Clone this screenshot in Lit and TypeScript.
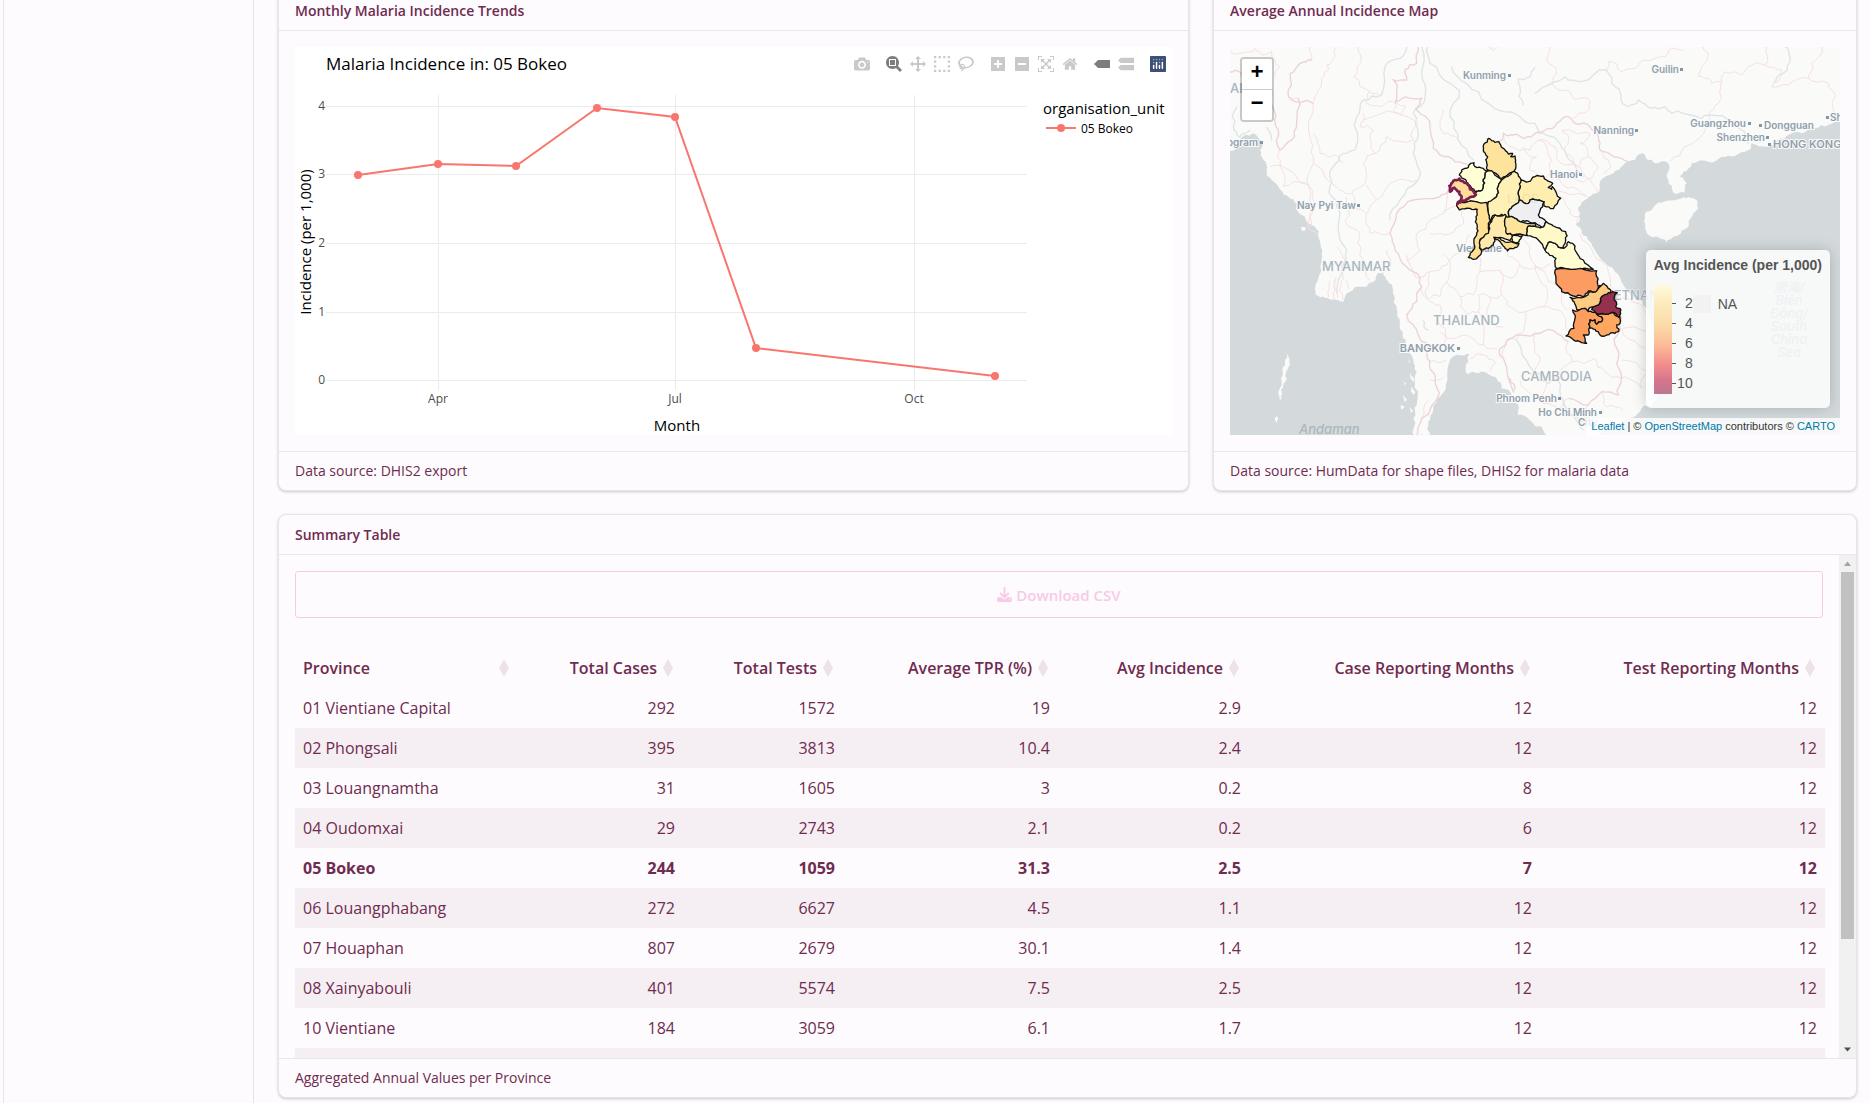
import { LitElement, html, svg, css } from "lit";
import { customElement } from "lit/decorators.js";

/* ---------- data ---------- */

interface Row {
  name: string;
  cases: string;
  tests: string;
  tpr: string;
  incidence: string;
  caseMonths: string;
  testMonths: string;
}

const row = (
  name: string, cases: string, tests: string, tpr: string,
  incidence: string, caseMonths: string, testMonths: string,
): Row => ({ name, cases, tests, tpr, incidence, caseMonths, testMonths });

const ROWS: Row[] = [
  row("01 Vientiane Capital", "292", "1572", "19", "2.9", "12", "12"),
  row("02 Phongsali", "395", "3813", "10.4", "2.4", "12", "12"),
  row("03 Louangnamtha", "31", "1605", "3", "0.2", "8", "12"),
  row("04 Oudomxai", "29", "2743", "2.1", "0.2", "6", "12"),
  row("05 Bokeo", "244", "1059", "31.3", "2.5", "7", "12"),
  row("06 Louangphabang", "272", "6627", "4.5", "1.1", "12", "12"),
  row("07 Houaphan", "807", "2679", "30.1", "1.4", "12", "12"),
  row("08 Xainyabouli", "401", "5574", "7.5", "2.5", "12", "12"),
  row("10 Vientiane", "184", "3059", "6.1", "1.7", "12", "12"),
];

const SELECTED = "05 Bokeo";

const COLUMNS: { key: keyof Row; label: string; cls: string }[] = [
  { key: "name", label: "Province", cls: "c-name" },
  { key: "cases", label: "Total Cases", cls: "c-cases" },
  { key: "tests", label: "Total Tests", cls: "c-tests" },
  { key: "tpr", label: "Average TPR (%)", cls: "c-tpr" },
  { key: "incidence", label: "Avg Incidence", cls: "c-inc" },
  { key: "caseMonths", label: "Case Reporting Months", cls: "c-casem" },
  { key: "testMonths", label: "Test Reporting Months", cls: "c-testm" },
];

const SERIES: [number, number][] = [
  [63, 128], [143, 117], [221, 119], [302, 61], [380, 70], [461, 301], [700, 329],
];

/* ---------- chart toolbar icons (1000-unit em, y axis up) ---------- */

const cells = [0, 1, 2, 3].flatMap((i) => [
  `M${i * 286} -150h143v143h-143z`, `M${i * 286} 707h143v143h-143z`,
  `M0 ${-150 + i * 286}h143v143h-143z`, `M857 ${-150 + i * 286}h143v143h-143z`,
]).join("");

interface Tool { label: string; w: number; d: string; active?: boolean }

const TOOLS: Tool[][] = [
  [
    { label: "Download plot as a png", w: 1000, d: "m500 450c-83 0-150-67-150-150 0-83 67-150 150-150 83 0 150 67 150 150 0 83-67 150-150 150z m400 150h-120c-16 0-34 13-39 29l-31 93c-6 15-23 28-40 28h-340c-16 0-34-13-39-28l-31-94c-6-15-23-28-40-28h-120c-55 0-100-45-100-100v-450c0-55 45-100 100-100h800c55 0 100 45 100 100v450c0 55-45 100-100 100z m-400-550c-138 0-250 112-250 250 0 138 112 250 250 250 138 0 250-112 250-250 0-138-112-250-250-250z m365 380c-19 0-35 16-35 35 0 19 16 35 35 35 19 0 35-16 35-35 0-19-16-35-35-35z" },
  ],
  [
    { label: "Zoom", w: 1000, active: true, d: "m1000-25l-250 251c40 63 63 138 63 218 0 224-182 406-407 406-224 0-406-182-406-406s183-406 407-406c80 0 155 22 218 62l250-250 125 125z m-812 250l0 438 437 0 0-438-437 0z m62 375l313 0 0-312-313 0 0 312z" },
    { label: "Pan", w: 1000, d: "m1000 350l-187 188 0-125-250 0 0 250 125 0-188 187-187-187 125 0 0-250-250 0 0 125-188-188 186-187 0 125 252 0 0-250-125 0 187-188 188 188-125 0 0 250 250 0 0-126 187 188z" },
    { label: "Box Select", w: 1000, d: cells },
    { label: "Lasso Select", w: 1031, d: "m1018 538c-36 207-290 336-568 286-277-48-473-256-436-463 10-57 36-108 76-151-13-66 11-137 68-183 34-28 75-41 114-42l-55-70 0 0c-2-1-3-2-4-3-10-14-8-34 5-45 14-11 34-8 45 4 1 1 2 3 2 5l0 0 113 140c16 11 31 24 45 40 4 3 6 7 8 11 48-3 100 0 151 9 278 48 473 255 436 462z m-624-379c-80 14-149 48-197 96 42 42 109 47 156 9 33-26 47-66 41-105z m-187-74c-19 16-33 37-39 60 50-32 109-55 174-68-42-25-95-24-135 8z m360 75c-34-7-69-9-102-8 8 62-16 128-68 170-73 59-175 54-244-5-9 20-16 40-20 61-28 159 121 317 333 354s407-60 434-217c28-159-121-318-333-355z" },
  ],
  [
    { label: "Zoom in", w: 875, d: "m1 787l0-875 875 0 0 875-875 0z m687-500l-187 0 0-187-125 0 0 187-188 0 0 125 188 0 0 187 125 0 0-187 187 0 0-125z" },
    { label: "Zoom out", w: 875, d: "m0 788l0-876 876 0 0 876-876 0z m688-500l-500 0 0 125 500 0 0-125z" },
    { label: "Autoscale", w: 1000, d: "m250 850l-187 0-63 0 0-62 0-188 63 0 0 188 187 0 0 62z m688 0l-188 0 0-62 188 0 0-188 62 0 0 188 0 62-62 0z m-875-938l0 188-63 0 0-188 0-62 63 0 187 0 0 62-187 0z m875 188l0-188-188 0 0-62 188 0 62 0 0 62 0 188-62 0z m-125 188l-1 0-93-94-156 156 156 156 92-93 2 0 0 250-250 0 0-2 93-92-156-156-156 156 94 92 0 2-250 0 0-250 0 0 93 93 157-156-157-156-93 94 0 0 0-250 250 0 0 0-94 93 156 157 156-157-93-93 0 0 250 0 0 250z" },
    { label: "Reset axes", w: 929, d: "m786 296v-267q0-15-11-26t-25-10h-214v214h-143v-214h-214q-15 0-25 10t-11 26v267q0 1 0 2t0 2l321 264 321-264q1-1 1-4z m124 39l-34-41q-5-5-12-6h-2q-7 0-12 3l-386 322-386-322q-7-4-13-4-7 2-12 7l-35 41q-4 5-3 13t6 12l401 334q18 15 42 15t43-15l136-114v109q0 8 5 13t13 5h107q8 0 13-5t5-13v-227l122-102q5-5 6-12t-4-13z" },
  ],
  [
    { label: "Show closest data on hover", w: 1500, active: true, d: "m375 725l0 0-375-375 375-374 0-1 1125 0 0 750-1125 0z" },
    { label: "Compare data on hover", w: 1125, d: "m187 786l0 2-187-188 188-187 0 0 937 0 0 373-938 0z m0-499l0 1-187-188 188-188 0 0 937 0 0 376-938-1z" },
  ],
];

/* ---------- map geometry (three units to a map pixel) ---------- */

/** Turns a coarse outline into an irregular natural-looking one. */
function rough(points: string, amp: number, closed = false): string {
  let pts = points.trim().split(/\s+/).map((p) => p.split(",").map(Number));
  if (closed) pts.push(pts[0]);
  for (let pass = 0; pass < 2; pass++) {
    const next: number[][] = [];
    for (let i = 0; i < pts.length - 1; i++) {
      const [ax, ay] = pts[i];
      const [bx, by] = pts[i + 1];
      const dx = bx - ax;
      const dy = by - ay;
      const len = Math.hypot(dx, dy) || 1;
      // The same edge gives the same jitter whichever way it is walked.
      const s = Math.sin((ax + bx) * 12.9898 + (ay + by) * 78.233) * 43758.5453;
      const side = ax + ay > bx + by ? -1 : 1;
      const k = len < 8 ? 0 : (s - Math.floor(s) - 0.5) * side * Math.min(amp, len * 0.45);
      next.push(pts[i], [(ax + bx) / 2 - (dy / len) * k, (ay + by) / 2 + (dx / len) * k]);
    }
    next.push(pts[pts.length - 1]);
    pts = next;
  }
  return "M" + pts.map((p) => p.map((v) => Math.round(v * 10) / 10).join(" ")).join("L") + (closed ? "Z" : "");
}

const MAINLAND = `15,309 45,264 70,259 95,284 90,309 100,339 110,369 125,399 155,431 175,449 200,471 230,524 255,539 265,569 276,609
276,634 268,684 258,744 285,752 310,757 340,764 360,734 390,719 425,706 440,684 460,676 475,704 488,724 495,754 500,784 510,829 518,864 525,894
550,939 560,974 565,1034 560,1074 550,1114 555,1170 600,1170 595,1124 610,1089 630,1049 652,999 660,939 690,924 718,922 715,944 713,982 745,979
775,982 800,994 815,1024 840,1034 850,1064 865,1074 865,1104 895,1114 910,1129 935,1140 960,1170 1075,1170 1125,1149 1200,1113 1235,1084 1265,1079
1280,1034 1280,924 1270,860 1250,784 1235,759 1205,744 1180,714 1155,674 1115,639 1095,609 1080,584 1055,559 1037,531 1050,499 1055,464 1075,449
1100,439 1110,404 1125,389 1150,379 1180,354 1215,339 1235,319 1250,337 1275,349 1315,349 1315,399 1330,437 1365,437 1370,409 1350,389 1360,374
1385,349 1435,344 1475,329 1515,327 1555,309 1565,289 1580,294 1605,299 1650,274 1675,264 1715,259 1755,244 1795,234 1830,219`;

const ISLANDS = [
  "1245,499 1260,491 1280,471 1300,464 1345,457 1375,451 1395,456 1403,479 1390,499 1377,519 1370,544 1345,564 1325,574 1310,586 1290,574 1250,559 1245,529",
  "175,919 178,944 168,974 172,994 160,1014 155,1044 148,1064 150,1024 158,984 165,944",
  "140,1104 146,1115 140,1128 134,1115",
  "225,505 240,515 248,535 235,530", "212,540 228,545 222,552",
  "540,965 548,990 552,1005 542,995", "520,1000 530,1010 524,1016", "545,1020 556,1035 550,1050 543,1035",
  "520,1045 530,1060 522,1065", "535,930 541,945 536,948", "512,1075 524,1080 516,1088", "540,1080 550,1090 543,1098",
  "1640,285 1652,280 1655,292 1644,296",
];

const BORDERS = [
  "565,0 560,49 525,69 530,99 490,99 495,169 510,159 575,154 560,189 600,239 610,304 655,329 700,349 730,359",
  "655,429 630,449 550,459 500,499 480,559 495,609 510,634 550,674 575,719 560,764 530,804 565,864 595,894 600,944 615,984 628,1039 575,1114 560,1170",
  "800,289 820,259 850,264 885,274 915,259 945,249 980,229 1015,209 1035,229 1080,239 1105,269 1110,309 1150,329 1195,344",
  "810,904 860,864 915,859 970,850 1015,884", "250,169 175,149 180,79 210,49 245,39",
  "205,154 200,229 185,279 150,309 145,249 132,189 125,129", "0,75 30,75 40,90", "840,994 850,1034 820,934 810,904",
  "1015,1054 1075,1074 1115,1034 1165,1044 1175,994 1165,934 1155,894 1170,834 1165,754",
];

const ADMIN = [
  "2,14 40,19 75,4 100,24 125,14 150,59 135,89", "320,0 315,29 290,54 295,69 275,109 255,149 250,169 242,279 250,349 240,419 255,479 245,539",
  "240,0 245,39 210,49", "175,149 205,154", "385,0 390,49 372,89 420,134 410,169 450,179 500,169",
  "250,259 270,319 320,324 340,349", "400,199 390,239 430,249 435,319 470,269 550,279 565,229 500,199 400,219",
  "435,319 400,349 405,409 365,439 370,479 410,499 440,459 410,414", "120,359 150,354 160,419 190,404 235,414 240,459 235,530 262,560",
  "150,309 150,354 200,390 235,414", "500,169 525,175 515,205 490,190 500,169", "410,499 420,560 480,559", "350,450 345,520 390,570 400,640 420,700",
  "320,600 350,640 340,700", "655,429 640,500 600,520 560,560 570,610 530,640", "640,500 690,480 700,530 660,560 600,560",
  "960,0 950,39 980,74 963,109 1005,129 1035,159 1073,154 1070,194 1030,214", "1130,74 1135,44 1175,74 1215,64 1245,39 1295,29 1325,4 1360,9",
  "1420,0 1435,24 1405,89 1435,94 1445,109 1475,104 1485,74 1535,84 1555,59 1605,54 1610,0", "1475,104 1465,169 1435,204 1430,239 1365,299 1320,344",
  "1605,54 1655,69 1625,119 1675,114 1735,94 1745,49 1777,0", "1735,94 1795,109 1810,159 1820,199", "775,0 790,12 800,0",
  "925,279 975,299 995,349 1045,359 1065,389 1105,439", "995,249 1015,279 1005,319 1045,359 1075,329 1050,289 1080,259 1030,254 995,249",
  "965,389 1005,419 1045,429 1070,449 975,429", "990,449 1010,479 1045,509 1040,530", "880,300 920,330 900,370 950,390 965,340 925,279",
  "1075,329 1105,360 1080,395 1040,400 1020,370", "1110,309 1140,350 1120,380", "925,279 900,310 840,300 820,259",
  "530,624 560,694 600,674 650,654 700,614 720,560", "590,754 630,749 650,704 690,749 730,744 750,674 810,669 840,694 870,654 910,664 960,650",
  "745,794 745,744 815,744 830,774 885,794 880,854 830,884 820,934", "630,854 650,874 710,864 760,894 800,904",
  "595,944 650,939", "720,934 760,924 795,944 780,974", "630,774 625,824 650,874 645,914", "590,754 575,719", "600,674 590,754 630,774",
  "750,674 740,620 760,580 820,600 860,640 870,654", "690,749 710,800 745,794 760,894", "815,744 810,669", "885,794 940,780 990,790 1010,850",
  "915,859 930,930 900,980 950,1010 1025,944 1095,934 1125,974 1175,994", "1015,884 1025,944", "950,1010 940,1070 990,1090 1015,1054",
  "1165,994 1235,1024 1255,974 1175,939", "1135,674 1165,754 1245,794 1245,854 1175,844", "1175,844 1230,900 1260,910", "915,654 955,704 995,734 1010,790",
  "1050,560 1090,620 1135,674", "940,780 950,720 915,654 900,600 860,560", "1115,1034 1130,1080 1180,1090", "1075,1074 1060,1110 1100,1140",
  "870,1000 920,1040 940,1070", "600,1000 640,990", "595,1060 575,1114", "480,660 470,610", "300,700 296,750", "318,690 322,752", "310,700 312,755", "334,700 338,758", "350,700 356,728",
  "250,349 330,430 365,439", "565,399 500,400 440,459", "640,189 640,260 685,279", "420,134 455,144", "640,620 660,660 650,704", "780,750 770,800 820,840",
];

const RIVERS = [
  "530,0 510,34 465,59 455,144 400,159 380,209 375,309 340,319 310,359 300,419 320,479 325,549 350,609 340,660 320,740",
  "575,0 575,79 585,149 550,199 565,259 550,319 565,399 510,459 480,520", "592,0 600,49 660,109 688,129 660,209 685,279 730,339",
  "665,59 710,109 775,169 870,209 915,229 990,290 1020,340 1060,390", "915,139 965,109 1005,89 1055,104 1130,69 1155,119 1175,164 1195,179 1225,159 1265,184 1305,179 1325,199 1395,207 1435,204 1515,224 1555,290",
  "1665,0 1680,29 1660,79 1630,109", "880,175 870,120 865,95 900,90 915,60", "20,180 10,240 30,270 60,250", "110,240 120,260 125,280", "580,820 595,850",
  "985,1000 1000,1060 1020,1100 1060,1150", "1000,1060 1040,1110 1100,1150", "860,880 900,960 960,1010",
];

const PROVINCES: [string, string][] = [
  ["#fee39c", "205,55 192,72 190,88 203,110 200,130 203,150 210,152 240,175 262,165 283,152 286,125 285,108 272,110 278,100 265,102 250,85 236,65 215,62"],
  ["#ffffd6", "118,165 125,150 145,142 152,130 162,128 165,140 190,145 197,152 203,153 195,170 190,178 190,200 182,213 165,215 145,193 135,178"],
  ["#ffffd6", "203,153 215,152 240,175 245,180 232,205 230,230 215,243 180,250 135,245 160,225 182,213 190,200 190,178 195,170"],
  ["#fff0b5", "245,180 262,170 283,154 295,168 303,178 300,205 298,240 275,262 265,275 268,290 262,295 245,283 225,285 212,305 208,290 205,245 230,230 232,205"],
  ["#ffeeb0", "303,180 325,185 345,170 370,168 380,180 398,190 385,203 395,208 397,200 422,235 400,266 372,258 372,245 358,240 340,237 325,250 298,240 300,205"],
  ["#efeff2", "298,240 325,250 340,237 358,240 372,245 368,260 355,285 378,305 365,322 350,312 345,308 320,302 300,305 280,292 268,290 265,275 275,262"],
  ["#fee094", "110,252 135,248 200,247 208,290 205,310 207,340 185,355 180,370 185,395 160,418 145,412 160,390 162,370 170,345 172,320 168,290 172,268 150,265 118,270"],
  ["#ffe9ac", "258,292 255,283 225,285 210,310 205,340 185,355 180,375 185,390 205,385 220,375 222,352 240,352 270,362 280,345 262,342"],
  ["#fffdd0", "280,345 307,347 297,365 275,365"],
  ["#fee39a", "258,290 280,292 300,305 345,310 347,320 323,320 322,347 280,345 262,342 258,325"],
  ["#fedf90", "222,352 240,355 250,362 275,365 297,370 290,382 270,385 263,393 255,385 245,372 235,360"],
  ["#fff9c8", "323,320 347,320 365,322 378,305 400,318 437,335 437,360 430,385 415,382 405,370 385,368 375,390 355,360 322,347"],
  ["#fffcd2", "375,390 385,368 405,370 415,382 432,385 445,365 458,370 465,390 490,420 520,448 465,448 410,446 408,415 385,400"],
  ["#fd9c62", "406,448 465,448 530,452 532,485 535,500 545,497 530,515 505,513 490,530 460,528 425,515 408,490"],
  ["#fdcc82", "450,532 495,530 508,515 530,513 550,490 570,508 572,516 555,525 540,545 530,560 510,562 505,575 495,565 470,568 462,545"],
  ["#fd9e5f", "458,570 495,565 505,575 530,580 545,590 545,605 530,613 525,600 510,600 508,625 505,645 490,645 500,670 480,665 455,655 438,648 462,625 465,595"],
  ["#fea95f", "530,582 565,582 580,577 600,595 600,610 590,615 597,628 585,640 560,645 540,645 525,628 508,625 510,600 525,600 530,613 545,605 545,590"],
  ["#96304f", "515,568 535,555 545,530 565,518 592,518 583,530 587,560 603,570 600,592 575,577 565,582 530,582"],
];

const BOKEO = "118,176 100,182 88,198 90,215 103,203 118,215 125,232 112,252 130,242 150,232 168,224 150,208 140,190";

interface Place { t: string; x: number; y: number; m?: number; end?: boolean; big?: boolean }

const CITIES: Place[] = [
  { t: "Kunming", x: 276, y: 32, m: 279, end: true },
  { t: "Nay Pyi Taw", x: 126, y: 162, m: 128, end: true },
  { t: "Chattogram", x: 28, y: 99, m: 31, end: true },
  { t: "Guilin", x: 449, y: 26, m: 451, end: true },
  { t: "Nanning", x: 404, y: 87, m: 406, end: true },
  { t: "Guangzhou", x: 516, y: 80, m: 519, end: true },
  { t: "Shenzhen", x: 535, y: 94, m: 537, end: true },
  { t: "Dongguan", x: 534, y: 82, m: 530 },
  { t: "HONG KONG", x: 543, y: 101, m: 539, big: true },
  { t: "Shantou", x: 600, y: 74, m: 597 },
  { t: "Hanoi", x: 348, y: 131, m: 350, end: true },
  { t: "BANGKOK", x: 225, y: 305, m: 228, end: true, big: true },
  { t: "Phnom Penh", x: 327, y: 355, m: 329, end: true },
  { t: "Ho Chi Minh", x: 367, y: 369, m: 370, end: true },
  { t: "City", x: 348, y: 379 },
  { t: "Vientiane", x: 226, y: 205 },
];

const COUNTRIES: Place[] = [
  { t: "AD", x: 0, y: 46 },
  { t: "MYANMAR", x: 92, y: 224 },
  { t: "THAILAND", x: 203, y: 278 },
  { t: "CAMBODIA", x: 291, y: 334 },
  { t: "VIETNAM", x: 431, y: 253, end: true },
];

const SEA = ["南海/", "Biên", "Đông/", "South", "China", "Sea"];

/* ---------- elements ---------- */

@customElement("trend-chart")
class TrendChart extends LitElement {
  static styles = css`
    :host { display: block; position: relative; background: #fff; }
    .plot { display: block; width: 100%; height: 388px; font-family: "Open Sans", sans-serif; }
    .grid { stroke: #ebebeb; stroke-width: 1; shape-rendering: crispEdges; }
    .series { fill: none; stroke: #f8766d; stroke-width: 2; }
    .dot { fill: #f8766d; }
    .title { font-size: 17px; }
    .axis { font-size: 15px; }
    .tick { font-size: 12px; fill: #4d4d4d; }
    .legend { font-size: 12px; }
    .modebar { position: absolute; top: 9px; right: 2px; display: flex; gap: 8px; }
    .group { display: flex; }
    .tool { display: flex; padding: 0 4px; border: 0; background: none; width: 24px; height: 16px; align-items: center; justify-content: center; }
    .tool svg { width: 16px; height: 16px; fill: #c9c9cb; }
    .tool.active svg { fill: #7d7d7d; }
  `;

  render() {
    const line = SERIES.map((p) => p.join(",")).join(" ");
    return html`
      <svg class="plot" viewBox="0 0 877 388" preserveAspectRatio="xMinYMin meet" role="img" aria-label="Malaria Incidence in: 05 Bokeo">
        ${[59, 127, 196, 265, 333].map((y, i) => svg`
          <line class="grid" x1="31" x2="732" y1=${y + 0.5} y2=${y + 0.5}></line>
          <text class="tick" x="30" y=${y + 4} text-anchor="end">${4 - i}</text>`)}
        ${[["Apr", 143], ["Jul", 380], ["Oct", 619]].map(([t, x]) => svg`
          <line class="grid" x1=${Number(x) + 0.5} x2=${Number(x) + 0.5} y1="48" y2="343"></line>
          <text class="tick" x=${x} y="356" text-anchor="middle">${t}</text>`)}
        <polyline class="series" points=${line}></polyline>
        ${SERIES.map(([x, y]) => svg`<circle class="dot" cx=${x} cy=${y} r="4"></circle>`)}
        <text class="title" x="31" y="23">Malaria Incidence in: 05 Bokeo</text>
        <text class="axis" x="382" y="384" text-anchor="middle">Month</text>
        <text class="axis" transform="translate(16 195) rotate(-90)" text-anchor="middle">Incidence (per 1,000)</text>
        <text class="axis" x="748" y="67">organisation_unit</text>
        <line class="series" x1="751" x2="781" y1="81" y2="81"></line>
        <circle class="dot" cx="766" cy="81" r="4"></circle>
        <text class="legend" x="786" y="86">05 Bokeo</text>
      </svg>
      <div class="modebar">
        ${TOOLS.map((g) => html`<div class="group">${g.map((t) => html`
          <button class="tool ${t.active ? "active" : ""}" type="button" aria-label=${t.label}>
            <svg viewBox="0 0 ${t.w} 1000"><path transform="matrix(1 0 0 -1 0 850)" d=${t.d}></path></svg>
          </button>`)}</div>`)}
        <div class="group">
          <button class="tool" type="button" aria-label="Produced with Plotly">
            <svg viewBox="0 0 132 132">
              <rect width="132" height="132" rx="6" fill="#3f4f75"></rect>
              <g fill="#80cfbe">
                <circle cx="78" cy="54" r="6"></circle><circle cx="102" cy="30" r="6"></circle><circle cx="78" cy="30" r="6"></circle>
                <circle cx="54" cy="30" r="6"></circle><circle cx="30" cy="30" r="6"></circle><circle cx="30" cy="54" r="6"></circle>
              </g>
              <g fill="#fff">
                <rect x="24" y="72" width="12" height="36" rx="6"></rect><rect x="48" y="48" width="12" height="60" rx="6"></rect>
                <rect x="72" y="72" width="12" height="36" rx="6"></rect><rect x="96" y="48" width="12" height="60" rx="6"></rect>
              </g>
            </svg>
          </button>
        </div>
      </div>`;
  }
}

@customElement("incidence-map")
class IncidenceMap extends LitElement {
  static styles = css`
    :host { display: block; position: relative; overflow: hidden; background: #d4dadc; font-family: "Liberation Sans", Arial, sans-serif; }
    .base { display: block; width: 100%; height: 388px; font-family: Inter, "Noto Sans CJK SC", sans-serif; }
    .land { fill: #fafaf8; }
    .admin { fill: none; stroke: #f4e0e3; stroke-width: 3; }
    .border { fill: none; stroke: #edd2d7; stroke-width: 4; }
    .river { fill: none; stroke: #dfe4e8; stroke-width: 4; }
    .province { stroke: #111; stroke-width: 4; stroke-linejoin: round; }
    .chosen { fill: #fedd98; stroke: #7b1d4f; stroke-width: 8; stroke-linejoin: round; }
    .city { font-size: 10px; font-weight: 600; fill: #8f9fae; stroke: #fafaf8; stroke-width: 2; paint-order: stroke; }
    .big { font-size: 11px; }
    .mark { fill: #8496a5; }
    .country { font-size: 13px; font-weight: 500; fill: #a9b6bf; stroke: #fafaf8; stroke-width: 1; paint-order: stroke; }
    .ghost { font-size: 12px; fill: #8a9299; opacity: 0.15; }
    .sea { font-size: 13px; font-style: italic; font-weight: 500; fill: #abb7bd; }
    .zoom { position: absolute; top: 10px; left: 10px; display: flex; flex-direction: column; border: 2px solid rgba(0, 0, 0, 0.2); border-radius: 4px; background-clip: padding-box; }
    .zoom button { width: 30px; height: 30px; padding: 0; border: 0; background: #fff; font: bold 22px/30px "Liberation Mono", monospace; color: #000; }
    .zoom .in { height: 31px; border-bottom: 1px solid #ccc; border-radius: 2px 2px 0 0; }
    .zoom .out { border-radius: 0 0 2px 2px; }
    .legend { position: absolute; right: 10px; bottom: 27px; padding: 6px 8px; height: 146px; border-radius: 5px; background: rgba(255, 255, 255, 0.8); box-shadow: 0 0 15px rgba(0, 0, 0, 0.2); font-size: 14px; line-height: 20px; color: #555; }
    .legend strong { display: block; line-height: 19px; margin-bottom: 10px; }
    .scale { display: flex; }
    .ramp { width: 18px; height: 109px; background: linear-gradient(#fffadb, #fcebbd 17%, #fbdca8 36%, #fbbf99 54%, #f48f8b 72%, #d5758c 88%, #bb7890); }
    .ticks { display: flex; flex-direction: column; padding-top: 8px; width: 21px; }
    .ticks span { position: relative; text-align: right; }
    .ticks span::before { content: ""; position: absolute; left: 0; top: 10px; width: 4px; height: 1px; background: #555; }
    .na { display: flex; gap: 7px; height: 18px; margin-top: 10px; line-height: 18px; }
    .na i { width: 18px; background: #f2f2f3; }
    .credit { position: absolute; right: 0; bottom: 0; padding: 0 5px; background: rgba(255, 255, 255, 0.8); font-size: 11px; line-height: 17px; color: #333; }
    .credit a { color: #0078a8; text-decoration: none; }
  `;

  render() {
    return html`
      <svg class="base" viewBox="0 0 611 388" preserveAspectRatio="xMinYMin slice" role="img" aria-label="Average annual incidence by province">
        <g transform="scale(0.33333)">
          <path class="land" d="${rough(MAINLAND, 16)}L1900 219L1900 -5L-5 -5L-5 314Z"></path>
          ${ISLANDS.map((p) => svg`<path class="land" d=${rough(p, 10, true)}></path>`)}
          ${RIVERS.map((p) => svg`<path class="river" d=${rough(p, 18)}></path>`)}
          ${ADMIN.map((p) => svg`<path class="admin" d=${rough(p, 22)}></path>`)}
          ${BORDERS.map((p) => svg`<path class="border" d=${rough(p, 18)}></path>`)}
        </g>
        ${COUNTRIES.map((c) => svg`<text class="country" x=${c.x} y=${c.y} text-anchor=${c.end ? "end" : "start"}>${c.t}</text>`)}
        ${CITIES.map((c) => svg`
          <text class="city ${c.big ? "big" : ""}" x=${c.x} y=${c.y} text-anchor=${c.end ? "end" : "start"}>${c.t}</text>
          ${c.m ? svg`<rect class="mark" x=${c.m - 1} y=${c.y - 5} width="3" height="3"></rect>` : ""}`)}
        <text class="sea" x="69" y="387">Andaman</text>
        ${SEA.map((t, i) => svg`<text class="sea" x="559" y=${245 + i * 13} text-anchor="middle">${t}</text>`)}
        <g transform="translate(190 73) scale(0.33333)">
          ${PROVINCES.map(([fill, p]) => svg`<path class="province" fill=${fill} d=${rough(p, 9, true)}></path>`)}
          <path class="chosen" d=${rough(BOKEO, 6, true)}></path>
        </g>
        <text class="ghost" x="277" y="156">LAOS</text>
      </svg>
      <div class="zoom">
        <button class="in" type="button" aria-label="Zoom in">+</button>
        <button class="out" type="button" aria-label="Zoom out">−</button>
      </div>
      <div class="legend">
        <strong>Avg Incidence (per 1,000)</strong>
        <div class="scale">
          <div class="ramp"></div>
          <div class="ticks">${[2, 4, 6, 8, 10].map((n) => html`<span>${n}</span>`)}</div>
          <div class="na"><i></i><span>NA</span></div>
        </div>
      </div>
      <div class="credit"><a href="#leaflet">Leaflet</a> | © <a href="#osm">OpenStreetMap</a> contributors © <a href="#carto">CARTO</a></div>`;
  }
}

@customElement("app-root")
class AppRoot extends LitElement {
  static styles = css`
    :host { display: block; background: #fdfbfd; color: #6f2b50; font-family: "Open Sans", sans-serif; font-size: 16px; line-height: 24px; }
    * { box-sizing: border-box; }
    .page { display: grid; grid-template-columns: 251px 1fr; min-height: 100vh; padding-left: 3px; overflow: hidden; }
    .side { border: 1px solid #e6e4e6; border-width: 0 1px; }
    .main { display: grid; grid-template-columns: repeat(12, minmax(0, 1fr)); gap: 23px 24px; align-content: start; padding: 0 13px 6px 24px; margin-top: -10px; }
    .card { display: flex; flex-direction: column; border: 1px solid #e7e5e7; border-radius: 8px; overflow: hidden; background: #fdfbfd; box-shadow: 0 1px 3px rgba(0, 0, 0, 0.2); }
    .trend { grid-column: span 7; }
    .map { grid-column: span 5; }
    .summary { grid-column: span 12; }
    h2 { margin: 0; padding: 8px 16px; border-bottom: 1px solid #e7e9e9; font-size: 14px; line-height: 23px; font-weight: 600; }
    .foot { padding: 8px 16px; border-top: 1px solid #e7e9e9; font-size: 14px; line-height: 22px; }
    .body { padding: 16px; }
    .pane { display: flex; height: 503px; }
    .scroll { flex: 1; min-width: 0; overflow-x: hidden; overflow-y: auto; scrollbar-width: none; padding: 16px 14px 0 16px; }
    .download { display: flex; align-items: center; justify-content: center; gap: 4px; width: calc(100% - 2px); height: 47px; margin-bottom: 30px; border: 1px solid #f7cbe6; border-radius: 3px; background: transparent; color: #f7cbe6; font: 600 15px/24px "Open Sans", sans-serif; }
    .download svg { width: 15px; height: 15px; fill: currentColor; }
    table { width: 100%; border-collapse: collapse; table-layout: fixed; }
    .c-name { width: 224px; }
    .c-cases { width: 164px; }
    .c-tests { width: 160px; }
    .c-tpr { width: 215px; }
    .c-inc { width: 191px; }
    .c-casem { width: 291px; }
    .c-testm { width: 285px; }
    th, td { height: 40px; padding: 0 8px; text-align: right; }
    th { font-weight: 600; }
    .head { display: flex; align-items: center; justify-content: flex-end; gap: 6px; padding-right: 2px; white-space: nowrap; }
    .head svg { width: 10px; height: 18px; fill: #ece2e8; }
    th:first-child .head { justify-content: space-between; }
    td:first-child { text-align: left; }
    tbody tr:nth-child(even) { background: #f5eff3; }
    .selected { font-weight: 700; }
    .bar { display: flex; flex-direction: column; align-items: center; justify-content: space-between; width: 17px; background: #f1f1f1; }
    .bar svg { width: 17px; height: 17px; }
    .rail { flex: 1; width: 13px; }
    .thumb { height: 367px; background: #c1c1c1; }
  `;

  render() {
    return html`
      <div class="page">
        <aside class="side"></aside>
        <main class="main">
          <section class="card trend">
            <h2>Monthly Malaria Incidence Trends</h2>
            <div class="body"><trend-chart></trend-chart></div>
            <div class="foot">Data source: DHIS2 export</div>
          </section>
          <section class="card map">
            <h2>Average Annual Incidence Map</h2>
            <div class="body"><incidence-map></incidence-map></div>
            <div class="foot">Data source: HumData for shape files, DHIS2 for malaria data</div>
          </section>
          <section class="card summary">
            <h2>Summary Table</h2>
            <div class="pane">
              <div class="scroll">
                <button class="download" type="button">
                  <svg viewBox="0 0 512 512" aria-hidden="true"><path d="M288 32c0-17.700-14.300-32-32-32s-32 14.300-32 32v242.700l-73.400-73.400c-12.500-12.500-32.800-12.500-45.300 0s-12.500 32.800 0 45.300l128 128c12.500 12.500 32.800 12.500 45.300 0l128-128c12.500-12.500 12.500-32.800 0-45.300s-32.800-12.500-45.300 0L288 274.700V32zM64 352c-35.300 0-64 28.700-64 64v32c0 35.300 28.700 64 64 64h384c35.300 0 64-28.700 64-64v-32c0-35.300-28.700-64-64-64H346.500l-45.300 45.300c-25 25-65.500 25-90.500 0L165.500 352H64zm368 56a24 24 0 1 1 0 48 24 24 0 1 1 0-48z"></path></svg>
                  Download CSV
                </button>
                <table>
                  <colgroup>${COLUMNS.map((c) => html`<col class=${c.cls}>`)}</colgroup>
                  <thead>
                    <tr>${COLUMNS.map((c) => html`
                      <th scope="col"><div class="head"><span>${c.label}</span><svg viewBox="0 0 10 18" aria-hidden="true"><path d="M5 0L10 9L5 18L0 9Z"></path></svg></div></th>`)}
                    </tr>
                  </thead>
                  <tbody>
                    ${ROWS.map((r) => html`
                      <tr class=${r.name === SELECTED ? "selected" : ""}>${COLUMNS.map((c) => html`<td>${r[c.key]}</td>`)}</tr>`)}
                    <tr>${COLUMNS.map(() => html`<td></td>`)}</tr>
                  </tbody>
                </table>
              </div>
              <div class="bar" aria-hidden="true">
                <svg viewBox="0 0 17 17"><path d="M5 11L8.500 6.500L12 11Z" fill="#a3a3a3"></path></svg>
                <div class="rail"><div class="thumb"></div></div>
                <svg viewBox="0 0 17 17"><path d="M5 6.500L12 6.500L8.500 10.500Z" fill="#505050"></path></svg>
              </div>
            </div>
            <div class="foot">Aggregated Annual Values per Province</div>
          </section>
        </main>
      </div>`;
  }
}
